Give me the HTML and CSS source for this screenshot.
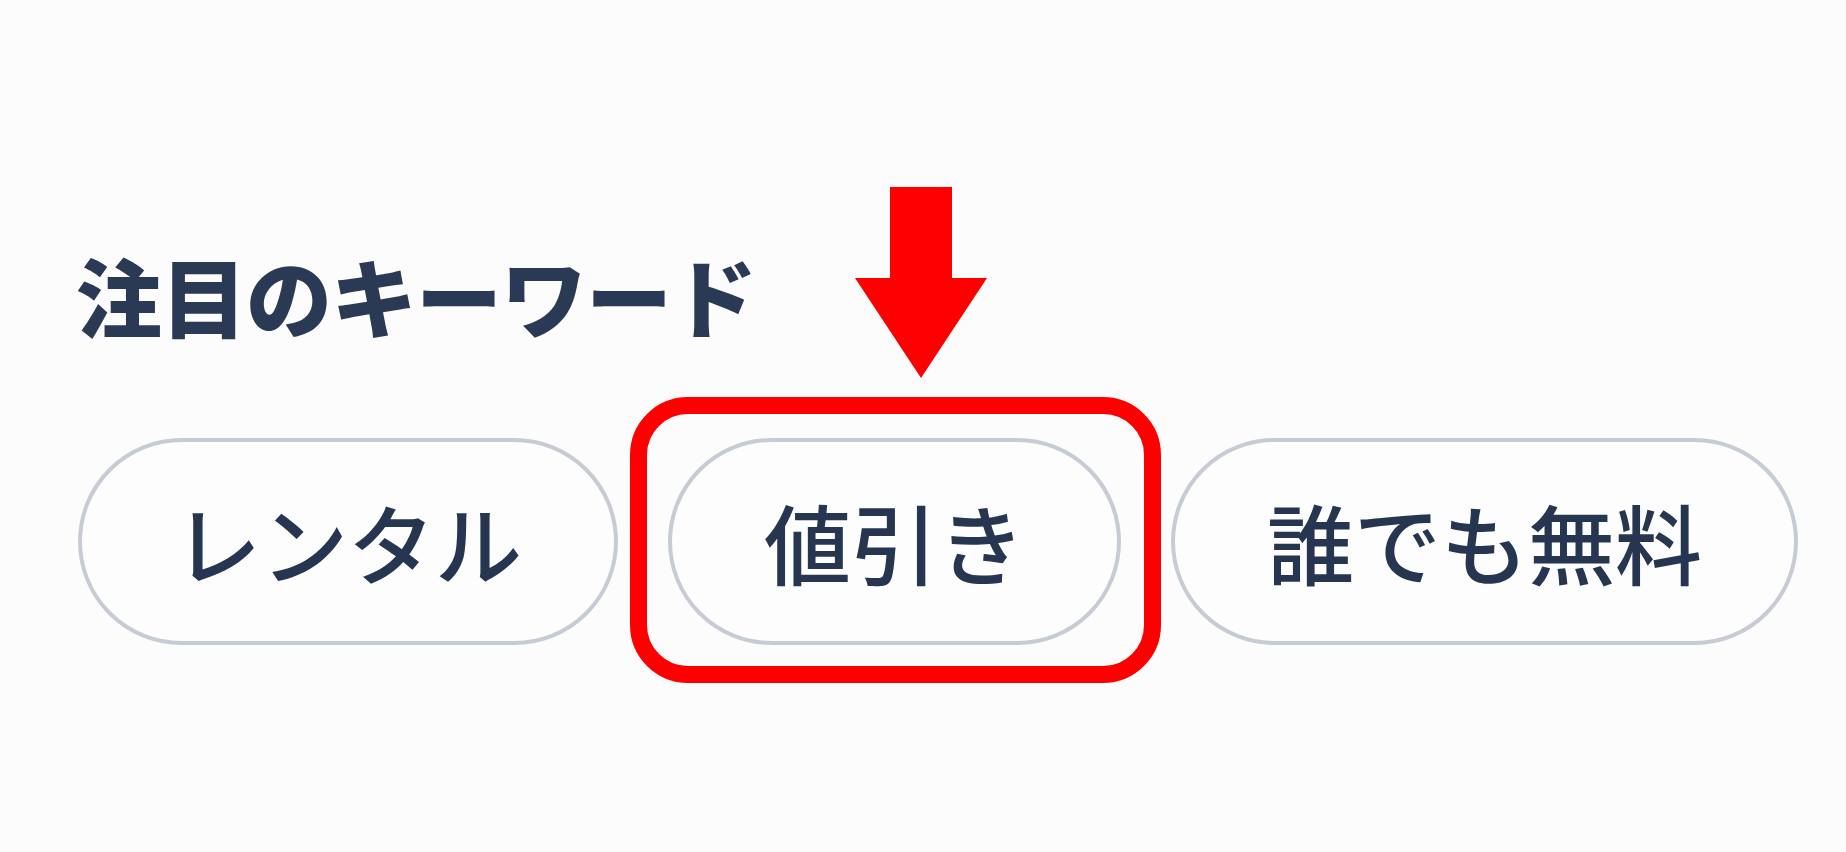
FILE: index.html
```html
<!DOCTYPE html>
<html lang="ja">
<head>
<meta charset="utf-8">
<title>注目のキーワード</title>
<link rel="stylesheet" href="styles.css">
</head>
<body>
<section class="keywords">
  <h2 class="keywords-title">注目のキーワード</h2>
  <div class="keyword-list">
    <a class="keyword-pill" href="#">レンタル</a>
    <a class="keyword-pill is-marked" href="#">値引き
      <svg class="marker-arrow" width="132" height="191" viewBox="0 0 132 191" aria-hidden="true">
        <polygon points="35,0 97,0 97,91 132,91 66,191 0,91 35,91" fill="#ff0000"/>
      </svg>
    </a>
    <a class="keyword-pill" href="#">誰でも無料</a>
  </div>
</section>
</body>
</html>
```
FILE: styles.css
```css
html, body {
  margin: 0;
  padding: 0;
  background: #fcfcfd;
}

body {
  width: 1846px;
  height: 852px;
  overflow: hidden;
  font-family: "Noto Sans CJK JP", "Noto Sans", sans-serif;
  color: #263650;
}

.keywords {
  padding: 252px 0 0 76px;
}

.keywords-title {
  margin: 0;
  font-size: 86px;
  line-height: 1;
  font-weight: 900;
  letter-spacing: -1px;
  color: #2a3a55;
}

.keyword-list {
  display: flex;
  align-items: center;
  gap: 50px;
  margin-top: 100px;
  padding-left: 2px;
}

.keyword-pill {
  position: relative;
  box-sizing: border-box;
  height: 207px;
  display: flex;
  align-items: center;
  padding: 0 92px;
  border: 4px solid #c7cbd4;
  border-radius: 104px;
  background: #fdfdfd;
  font-size: 87px;
  line-height: 1;
  font-weight: 500;
  color: #263650;
  text-decoration: none;
  white-space: nowrap;
}

/* red highlight frame drawn around the marked keyword */
.keyword-pill.is-marked::after {
  content: "";
  position: absolute;
  left: -42px;
  right: -44px;
  top: -45px;
  bottom: -42px;
  border: 17px solid #ff0000;
  border-radius: 58px;
  pointer-events: none;
}

.marker-arrow {
  position: absolute;
  left: 183px;
  top: -255px;
}
```
